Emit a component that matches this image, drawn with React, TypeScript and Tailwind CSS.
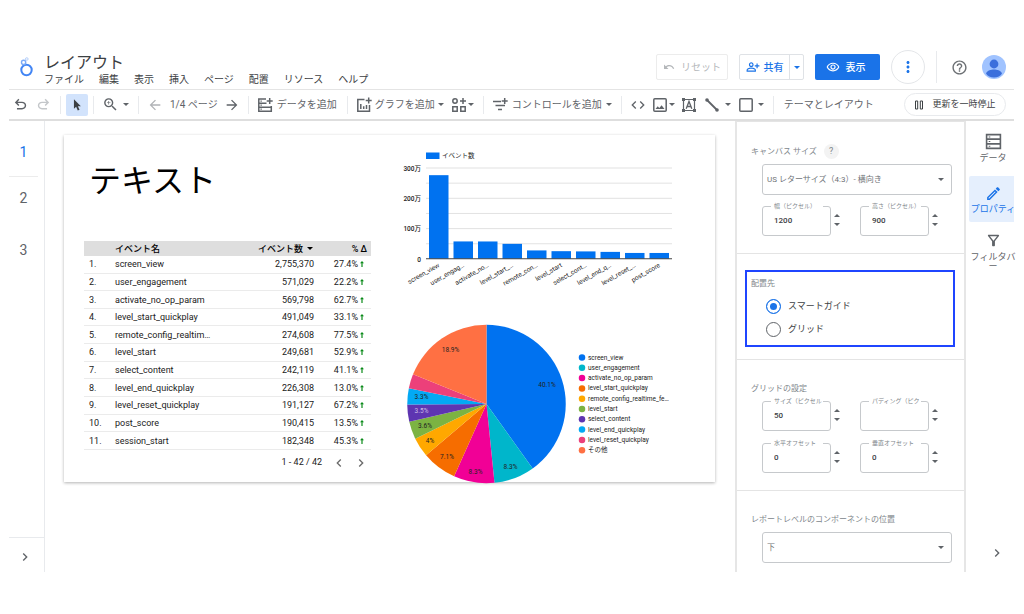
import { useState, type ReactNode } from "react";
import {
  MdUndo,
  MdZoomIn,
  MdArrowBack,
  MdArrowForward,
  MdCode,
  MdOutlineRemoveRedEye,
  MdOutlinePersonAddAlt,
  MdMoreVert,
  MdHelpOutline,
  MdOutlineEdit,
  MdOutlineFilterAlt,
  MdChevronRight,
  MdChevronLeft,
} from "react-icons/md";

const menus = ["ファイル", "編集", "表示", "挿入", "ページ", "配置", "リソース", "ヘルプ"];

const rows: [string, string, string][] = [
  ["screen_view", "2,755,370", "27.4%"],
  ["user_engagement", "571,029", "22.2%"],
  ["activate_no_op_param", "569,798", "62.7%"],
  ["level_start_quickplay", "491,049", "33.1%"],
  ["remote_config_realtim…", "274,608", "77.5%"],
  ["level_start", "249,681", "52.9%"],
  ["select_content", "242,119", "41.1%"],
  ["level_end_quickplay", "226,308", "13.0%"],
  ["level_reset_quickplay", "191,127", "67.2%"],
  ["post_score", "190,415", "13.5%"],
  ["session_start", "182,348", "45.3%"],
];

const bars: [string, number][] = [
  ["screen_view", 2755370],
  ["user_engag…", 571029],
  ["activate_no…", 569798],
  ["level_start_…", 491049],
  ["remote_con…", 274608],
  ["level_start", 249681],
  ["select_cont…", 242119],
  ["level_end_q…", 226308],
  ["level_reset_…", 191127],
  ["post_score", 190415],
];

type Slice = { name: string; share: number; color: string; label?: string; x?: number; y?: number; ink?: string };

const slices: Slice[] = [
  { name: "screen_view", share: 40.1, color: "#0072f0", label: "40.1%", x: 302, y: 129 },
  { name: "user_engagement", share: 8.3, color: "#00b6cb", label: "8.3%", x: 229, y: 293 },
  { name: "activate_no_op_param", share: 8.3, color: "#f10096", label: "8.3%", x: 159, y: 303 },
  { name: "level_start_quickplay", share: 7.1, color: "#f66d00", label: "7.1%", x: 102, y: 273 },
  { name: "remote_config_realtime_fe…", share: 4, color: "#ffa800", label: "4%", x: 68, y: 241 },
  { name: "level_start", share: 3.6, color: "#7cb342", label: "3.6%", x: 58, y: 211 },
  { name: "select_content", share: 3.5, color: "#5e35b1", label: "3.5%", x: 51, y: 182, ink: "#c9bce6" },
  { name: "level_end_quickplay", share: 3.3, color: "#03a9f4", label: "3.3%", x: 51, y: 154 },
  { name: "level_reset_quickplay", share: 2.9, color: "#ec407a" },
  { name: "その他", share: 18.9, color: "#ff7043", label: "18.9%", x: 109, y: 60 },
];

function Caret({ up = false, className = "" }: { up?: boolean; className?: string }) {
  return (
    <svg viewBox="0 0 6 3" className={`w-1.5 shrink-0 ${className}`} fill="currentColor" aria-hidden="true">
      <path d={up ? "M0 3L3 0L6 3Z" : "M0 0H6L3 3Z"} />
    </svg>
  );
}

function Sep() {
  return <span className="h-4.5 w-px shrink-0 bg-[#e8eaed]" />;
}

function ArrowIcon({ flip = false }: { flip?: boolean }) {
  return (
    <svg viewBox="0 -960 960 960" className="size-[17px]" fill="currentColor" aria-hidden="true">
      <path
        transform={flip ? "translate(960 0) scale(-1 1)" : undefined}
        d="M280-200v-80h284q63 0 109.500-40T720-420q0-60-46.500-100T564-560H312l104 104-56 56-200-200 200-200 56 56-104 104h252q97 0 167.500 63T800-420q0 94-70.500 157T564-200H280Z"
      />
    </svg>
  );
}

function Glyph({ children, className = "size-4" }: { children: ReactNode; className?: string }) {
  return (
    <svg
      viewBox="0 0 16 16"
      className={`shrink-0 ${className}`}
      fill="none"
      stroke="currentColor"
      strokeWidth="1.500"
      aria-hidden="true"
    >
      {children}
    </svg>
  );
}

function Header() {
  return (
    <header className="flex h-[42px] items-start border-b border-[#e4e4e4]">
      <svg viewBox="0 0 16 22" className="mt-2 ml-2.5 w-4 shrink-0" fill="none" aria-hidden="true">
        <circle cx="7.500" cy="14" r="5.200" stroke="#4285f4" strokeWidth="2" />
        <circle cx="4.600" cy="6.400" r="2.100" stroke="#7baaf7" strokeWidth="1.400" />
        <circle cx="7.800" cy="3" r="1.300" stroke="#b5cffb" strokeWidth="1" />
      </svg>
      <div className="ml-[9px] flex-1 whitespace-nowrap">
        <h1 className="mt-[5px] h-5 text-[16px] leading-5 text-[#3c4043]">レイアウト</h1>
        <nav className="flex h-3.5 gap-[15px] text-[10px] leading-[14px] text-[#3c4043]">
          {menus.map((m) => (
            <button key={m} type="button">
              {m}
            </button>
          ))}
        </nav>
      </div>
      <div className="flex h-[38px] items-center text-[10px]">
        <button
          type="button"
          className="flex h-[26px] w-[72px] items-center justify-center gap-[6px] rounded-xs border border-[#ececec] text-[#b4b7ba]"
        >
          <MdUndo className="size-3" />
          リセット
        </button>
        <div className="ml-[11px] flex h-[26px] w-[65px] rounded-xs border border-[#dfe2e6] text-[#1a73e8]">
          <button type="button" className="flex flex-1 items-center justify-center gap-1 font-medium">
            <MdOutlinePersonAddAlt className="size-3.5" />
            共有
          </button>
          <button
            type="button"
            aria-label="共有オプション"
            className="flex w-[14px] items-center justify-center border-l border-[#dfe2e6]"
          >
            <Caret />
          </button>
        </div>
        <button
          type="button"
          className="ml-[11px] flex h-[26px] w-[65px] items-center justify-center gap-1.5 rounded-xs bg-[#1a73e8] pr-1 font-medium text-white"
        >
          <MdOutlineRemoveRedEye className="size-3.5" />
          表示
        </button>
        <button
          type="button"
          aria-label="その他"
          className="ml-[11px] flex size-[34px] items-center justify-center rounded-full border border-[#e4e6e9] text-[#1a73e8]"
        >
          <MdMoreVert className="size-4.5" />
        </button>
        <span className="ml-[11px] h-8 w-px bg-[#e8eaed]" />
        <button type="button" aria-label="ヘルプ" className="ml-[14px] text-[#6b6f73]">
          <MdHelpOutline className="size-[17px]" />
        </button>
        <svg viewBox="0 0 24 24" className="mr-2 ml-[14px] size-6" role="img" aria-label="アカウント">
          <clipPath id="avatar">
            <circle cx="12" cy="12" r="12" />
          </clipPath>
          <g clipPath="url(#avatar)">
            <rect width="24" height="24" fill="#a0c3ff" />
            <circle cx="12" cy="9" r="4.400" fill="#3b6fdc" />
            <path d="M4 18.500C5.500 15.500 9 14.600 12 14.600S18.500 15.500 20 18.500C18.500 21 15.500 22.400 12 22.400S5.500 21 4 18.500Z" fill="#3b6fdc" />
          </g>
        </svg>
      </div>
    </header>
  );
}

function Toolbar() {
  return (
    <div className="flex h-[31px] items-center border-b-2 border-[#dedede] text-[10px] whitespace-nowrap text-[#5f6368]">
      <button type="button" aria-label="元に戻す" className="flex w-[22px] justify-center">
        <ArrowIcon />
      </button>
      <button type="button" aria-label="やり直す" className="mr-[6px] ml-px flex w-[22px] justify-center text-[#c4c7ca]">
        <ArrowIcon flip />
      </button>
      <Sep />
      <button
        type="button"
        aria-label="選択"
        className="mx-[5px] flex size-[22px] items-center justify-center rounded-xs bg-[#d2e3fc]"
      >
        <svg viewBox="0 0 16 16" className="size-3.5" fill="#3c4043" aria-hidden="true">
          <path d="M4.500 1.500V12.300L7 10L8.900 14.400L10.900 13.500L9 9.300H12.400Z" />
        </svg>
      </button>
      <Sep />
      <button type="button" aria-label="ズーム" className="mr-[9px] ml-2 flex items-center gap-1">
        <MdZoomIn className="size-[17px]" />
        <Caret />
      </button>
      <Sep />
      <button type="button" aria-label="前のページ" className="ml-2 text-[#b0b3b6]">
        <MdArrowBack className="size-4" />
      </button>
      <span className="mr-1.5 ml-[7px]">1/4 ページ</span>
      <button type="button" aria-label="次のページ" className="mr-2">
        <MdArrowForward className="size-4" />
      </button>
      <Sep />
      <button type="button" className="mr-[10px] ml-2 flex items-center gap-1">
        <Glyph>
          <path d="M9 2H1.800V14.200H14.300V10.200H1.800M14.300 10.200V9M1.800 6.200H9.500M12.700 1V7M9.700 4H15.700" />
          <path d="M3.500 4.100H4.800M3.500 8.200H4.800M3.500 12.200H4.800" strokeWidth="1.200" />
        </Glyph>
        データを追加
      </button>
      <Sep />
      <button type="button" className="ml-2 flex items-center gap-[3px]">
        <Glyph>
          <path d="M8.500 2.500H1.800V14.200H13.500V8M12.700 .5V6.500M9.700 3.500H15.700M4.800 12V7M7.700 12V9.300M10.500 12V8" />
        </Glyph>
        グラフを追加
        <Caret />
      </button>
      <button type="button" aria-label="コミュニティ" className="mr-[9px] ml-[7px] flex items-center gap-px">
        <Glyph>
          <circle cx="4" cy="4" r="2.200" />
          <path d="M12 1V7M9 4H15M1.800 9.800H6.200V14.200H1.800ZM9.800 9.800H14.200V14.200H9.800Z" />
        </Glyph>
        <Caret />
      </button>
      <Sep />
      <button type="button" className="mr-[9px] ml-2 flex items-center gap-1">
        <Glyph>
          <path d="M1 4.500H9M3.500 8.500H13M6 12.500H10M12.700 1V7M9.700 4H15.700" />
        </Glyph>
        コントロールを追加
        <Caret />
      </button>
      <Sep />
      <button type="button" aria-label="URL の埋め込み" className="ml-2">
        <MdCode className="size-4" />
      </button>
      <button type="button" aria-label="画像" className="ml-[6px] flex items-center gap-px">
        <Glyph>
          <rect x="1.800" y="1.800" width="12.400" height="12.400" rx="1" />
          <path d="M3.500 12L5.700 9.300L7.300 11L9.600 8.200L12.500 12Z" fill="currentColor" stroke="none" />
        </Glyph>
        <Caret />
      </button>
      <button type="button" aria-label="テキスト" className="ml-[6px]">
        <Glyph>
          <path d="M2.500 2.500H13.500V13.500H2.500Z" strokeWidth="1.200" />
          <path d="M1 1H4V4H1ZM12 1H15V4H12ZM1 12H4V15H1ZM12 12H15V15H12Z" fill="currentColor" stroke="none" />
          <path d="M5.200 11.800L8 4.400L10.800 11.800M6.200 9.500H9.800" strokeWidth="1.300" />
        </Glyph>
      </button>
      <button type="button" aria-label="線" className="ml-[7px] flex items-center gap-[5px]">
        <Glyph>
          <path d="M3 3L13 13" strokeWidth="1.800" />
          <circle cx="3" cy="3" r="1.800" fill="currentColor" stroke="none" />
          <circle cx="13" cy="13" r="1.800" fill="currentColor" stroke="none" />
        </Glyph>
        <Caret />
      </button>
      <button type="button" aria-label="図形" className="mr-[9px] ml-[7px] flex items-center gap-1">
        <Glyph>
          <rect x="1.800" y="1.800" width="12.400" height="12.400" rx="1" />
        </Glyph>
        <Caret />
      </button>
      <Sep />
      <button type="button" className="ml-[10px]">
        テーマとレイアウト
      </button>
      <button
        type="button"
        className="mr-2 ml-auto flex h-[23px] w-[102px] items-center justify-center gap-[8px] rounded-full border border-[#e8eaed] text-[9px] text-[#3c4043]"
      >
        <svg viewBox="0 0 10 10" className="size-2.5" fill="none" stroke="currentColor" aria-hidden="true">
          <path d="M1.500 1H3.700V9H1.500ZM6.300 1H8.500V9H6.300Z" />
        </svg>
        更新を一時停止
      </button>
    </div>
  );
}

function PageRail() {
  return (
    <nav className="flex w-9 shrink-0 flex-col border-r border-[#e8eaed] text-[14px] text-[#5f6368]">
      <button type="button" className="mr-1.5 h-14 border-b border-[#ececec] pt-2 text-[#1a73e8]">
        1
      </button>
      <button type="button" className="mt-[7px] mr-1.5 h-7">
        2
      </button>
      <button type="button" className="mt-6 mr-1.5 h-7">
        3
      </button>
      <button
        type="button"
        aria-label="展開"
        className="mt-auto flex h-[35px] items-center justify-center border-t border-[#e8eaed] pt-1 pr-1"
      >
        <MdChevronRight className="size-4" />
      </button>
    </nav>
  );
}

function EventTable() {
  return (
    <table className="h-[209px] w-full text-[9px] leading-[14px] text-[#212121]">
      <thead>
        <tr className="h-[15px] bg-[#dedede] text-black">
          <th className="w-[31px]" />
          <th className="p-0 text-left font-medium">イベント名</th>
          <th className="w-24 p-0 font-medium">
            <span className="flex items-center justify-end gap-1">
              イベント数
              <Caret className="mr-px" />
            </span>
          </th>
          <th className="w-[57px] p-0 pr-1 text-right font-medium">% Δ</th>
        </tr>
      </thead>
      <tbody>
        {rows.map(([name, count, delta], i) => (
          <tr key={name} className="border-b border-[#ebebeb]">
            <td className="p-0 pl-[5px]">{i + 1}.</td>
            <td className="p-0">{name}</td>
            <td className="p-0 text-right">{count}</td>
            <td className="p-0 pr-[7px]">
              <span className="flex items-center justify-end gap-0.5">
                {delta}
                <svg viewBox="0 0 4 6" className="w-1" aria-hidden="true">
                  <path d="M2 0L4 2.300H2.600V6H1.400V2.300H0Z" fill="#0b8a1a" />
                </svg>
              </span>
            </td>
          </tr>
        ))}
      </tbody>
    </table>
  );
}

function BarChart() {
  const base = 221.5;
  const unit = 182 / 3000000;
  return (
    <svg viewBox="0 0 600 296" className="h-[148px] w-[300px]" role="img" aria-label="イベント数" fontSize="13">
      <rect x="60" y="9" width="27" height="13" fill="#0072f0" />
      <text x="92" y="20" fill="#222">
        イベント数
      </text>
      {[0, 1, 2, 3, 4, 5].map((i) => (
        <rect key={i} x="60" y={39 + i * 30.3} width="492" height="2" fill="#e2e2e2" />
      ))}
      {["300万", "200万", "100万", "0"].map((t, i) => (
        <text key={t} x="50" y={45 + i * 60.7} textAnchor="end" fill="#222" fontWeight="500">
          {t}
        </text>
      ))}
      {bars.map(([name, value], i) => (
        <g key={name}>
          <rect x={66 + i * 49} y={base - value * unit} width="39" height={value * unit} fill="#0072f0" />
          <text transform={`translate(${88 + i * 49} 237) rotate(-30)`} textAnchor="end" fill="#222">
            {name}
          </text>
        </g>
      ))}
      <rect x="60" y="220.500" width="492" height="2" fill="#444" />
    </svg>
  );
}

function PieChart() {
  const cx = 181;
  const cy = 168;
  const r = 158.5;
  const total = slices.reduce((sum, s) => sum + s.share, 0);
  let acc = 0;
  const point = (v: number) => {
    const a = (v / total) * 2 * Math.PI;
    return `${cx + r * Math.sin(a)} ${cy - r * Math.cos(a)}`;
  };
  return (
    <svg
      viewBox="0 0 600 324"
      className="mt-6 h-[162px] w-[300px] overflow-visible"
      role="img"
      aria-label="イベントの割合"
      fontSize="13"
    >
      {slices.map((s) => {
        const from = acc;
        acc += s.share;
        return <path key={s.name} d={`M${cx} ${cy}L${point(from)}A${r} ${r} 0 0 1 ${point(acc)}Z`} fill={s.color} />;
      })}
      {slices.map((s, i) => (
        <g key={s.name}>
          {s.label && (
            <text x={s.x} y={(s.y ?? 0) + 4} textAnchor="middle" fill={s.ink ?? "#222"}>
              {s.label}
            </text>
          )}
          <circle cx="372" cy={75 + i * 20.6} r="6.500" fill={s.color} />
          <text x="384" y={79 + i * 20.6} fill="#222">
            {s.name}
          </text>
        </g>
      ))}
    </svg>
  );
}

function Canvas() {
  return (
    <main className="min-w-0 flex-1 pt-[14px] pr-5 pl-[19px]">
      <div className="flex bg-white pl-5 shadow-[0_1px_3px_rgba(0,0,0,0.3)]">
        <div className="w-[287px] shrink-0 pt-[26px] pb-[9px]">
          <h2 className="ml-[5px] h-10 text-[32px] leading-10 text-black">テキスト</h2>
          <div className="mt-10">
            <EventTable />
          </div>
          <div className="mt-[3px] flex h-5 items-center justify-end text-[9px] text-[#212121]">
            <span className="mr-[9px]">1 - 42 / 42</span>
            <button type="button" aria-label="前へ" className="mr-[6px] text-[#6b6b6b]">
              <MdChevronLeft className="size-4" />
            </button>
            <button type="button" aria-label="次へ" className="mr-0.5 text-[#6b6b6b]">
              <MdChevronRight className="size-4" />
            </button>
          </div>
        </div>
        <div className="ml-[25px] flex flex-col pt-[13px]">
          <BarChart />
          <PieChart />
        </div>
      </div>
    </main>
  );
}

function NumberField({ id, label, initial }: { id: string; label: string; initial: string }) {
  const [value, setValue] = useState(initial);
  const step = (d: number) => setValue(String(Math.max(0, Number(value) + d)));
  return (
    <div className="flex w-[98px] items-end">
      <fieldset className="h-[34px] w-[69px] rounded-[3px] border border-[#c6c9cc] pl-2">
        <legend className="h-2 w-[52px] pl-[3px] text-[6px] leading-[8px] whitespace-nowrap text-[#80868b]">
          <label htmlFor={id}>{label}</label>
        </legend>
        <input
          id={id}
          value={value}
          onChange={(e) => setValue(e.target.value)}
          className="h-5 w-14 pl-[3px] text-[8px] font-medium text-[#3c4043] outline-none"
        />
      </fieldset>
      <div className="mb-[7px] ml-[3px] flex flex-col text-[#5f6368]">
        <button type="button" aria-label={`${label} 増やす`} className="flex h-[9px] items-center" onClick={() => step(1)}>
          <Caret up />
        </button>
        <button type="button" aria-label={`${label} 減らす`} className="flex h-[9px] items-center" onClick={() => step(-1)}>
          <Caret />
        </button>
      </div>
    </div>
  );
}

function SelectBox({ label, options }: { label: string; options: string[] }) {
  return (
    <div className="relative ml-[25px] w-[190px]">
      <select
        aria-label={label}
        className="block h-[31px] w-full appearance-none rounded-[3px] border border-[#c6c9cc] pl-1 text-[8px] text-[#6f7377] outline-none"
      >
        {options.map((o) => (
          <option key={o}>{o}</option>
        ))}
      </select>
      <Caret className="pointer-events-none absolute top-[14px] right-2 text-[#5f6368]" />
    </div>
  );
}

function Radio({
  label,
  value,
  checked,
  onPick,
}: {
  label: string;
  value: string;
  checked: boolean;
  onPick: (v: string) => void;
}) {
  return (
    <label className="flex h-[23px] items-center gap-[7px] text-[9px] text-[#3c4043]">
      <input
        type="radio"
        name="snap"
        checked={checked}
        onChange={() => onPick(value)}
        className="size-[15px] appearance-none rounded-full border border-[#5f6368] checked:border-[#1a73e8] checked:bg-[#1a73e8] checked:shadow-[inset_0_0_0_3px_white]"
      />
      {label}
    </label>
  );
}

function PropertyPanel() {
  const [snap, setSnap] = useState("smart");
  return (
    <aside className="w-[231px] shrink-0 border-x-2 border-[#e6e6e6] text-[8px] text-[#80868b]">
      <section className="h-[133px] border-y border-[#e4e4e4] pt-[21px]">
        <h3 className="ml-[14px] flex h-[17px] items-center gap-[7px]">
          キャンバス サイズ
          <button type="button" aria-label="説明" className="size-[15px] rounded-full bg-[#f3f3f3] text-[9px] leading-[15px]">
            ?
          </button>
        </h3>
        <div className="mt-1">
          <SelectBox label="キャンバス サイズ" options={["US レターサイズ（4:3）- 横向き"]} />
        </div>
        <div className="mt-[7px] ml-[25px] flex">
          <NumberField id="w" label="幅（ピクセル）" initial="1200" />
          <NumberField id="h" label="高さ（ピクセル）" initial="900" />
        </div>
      </section>
      <section className="h-[106px] border-b border-[#e4e4e4] pt-4 pr-[9px] pl-2">
        <div className="h-[77px] border-2 border-[#1f45ff] pt-1">
          <h3 className="ml-1 h-4 leading-4">配置先</h3>
          <div className="mt-[3px] ml-[19px]">
            <Radio label="スマートガイド" value="smart" checked={snap === "smart"} onPick={setSnap} />
            <Radio label="グリッド" value="grid" checked={snap === "grid"} onPick={setSnap} />
          </div>
        </div>
      </section>
      <section className="h-[131px] border-b border-[#e4e4e4] pt-[21px]">
        <h3 className="ml-[14px] h-4 leading-4">グリッドの設定</h3>
        <div className="ml-[25px] flex flex-wrap gap-y-2">
          <NumberField id="size" label="サイズ（ピクセル" initial="50" />
          <NumberField id="pad" label="パディング（ピク" initial="" />
          <NumberField id="hx" label="水平オフセット" initial="0" />
          <NumberField id="vx" label="垂直オフセット" initial="0" />
        </div>
      </section>
      <section className="pt-[21px]">
        <h3 className="mb-1 ml-[14px] h-4 leading-4">レポートレベルのコンポーネントの位置</h3>
        <SelectBox label="レポートレベルのコンポーネントの位置" options={["下", "上"]} />
      </section>
    </aside>
  );
}

function RightRail() {
  return (
    <nav className="flex w-12 shrink-0 flex-col items-end pt-3 text-[9px] leading-[9px] text-[#5f6368]">
      <button type="button" className="flex w-[42px] flex-col items-center gap-1">
        <Glyph className="size-[17px]">
          <path d="M1.500 1.500H14.500V14.500H1.500ZM1.500 5.800H14.500M1.500 10.200H14.500" />
          <path d="M3.500 3.700H5M3.500 8H5M3.500 12.400H5" strokeWidth="1" />
        </Glyph>
        データ
      </button>
      <button
        type="button"
        className="mt-[13px] flex h-[46px] w-[45px] flex-col items-center gap-[3px] rounded-l-xs bg-[#e5effd] pt-[9px] pl-[3px] text-[#1a73e8]"
      >
        <MdOutlineEdit className="size-[17px] shrink-0" />
        <span className="whitespace-nowrap">プロパティ</span>
      </button>
      <button type="button" className="mt-[10px] flex w-[45px] flex-col items-center gap-1 pl-[3px]">
        <MdOutlineFilterAlt className="size-[17px]" />
        <span className="w-[45px]">フィルタバー</span>
      </button>
      <button type="button" aria-label="折りたたむ" className="mt-auto mr-[9px] mb-[11px]">
        <MdChevronRight className="size-4" />
      </button>
    </nav>
  );
}

export default function App() {
  return (
    <div className="flex min-h-screen flex-col bg-white pt-12 pr-[10px] pb-[42px] pl-[9px] font-['Roboto','Noto_Sans_CJK_JP',sans-serif]">
      <Header />
      <Toolbar />
      <div className="flex flex-1">
        <PageRail />
        <Canvas />
        <PropertyPanel />
        <RightRail />
      </div>
    </div>
  );
}
